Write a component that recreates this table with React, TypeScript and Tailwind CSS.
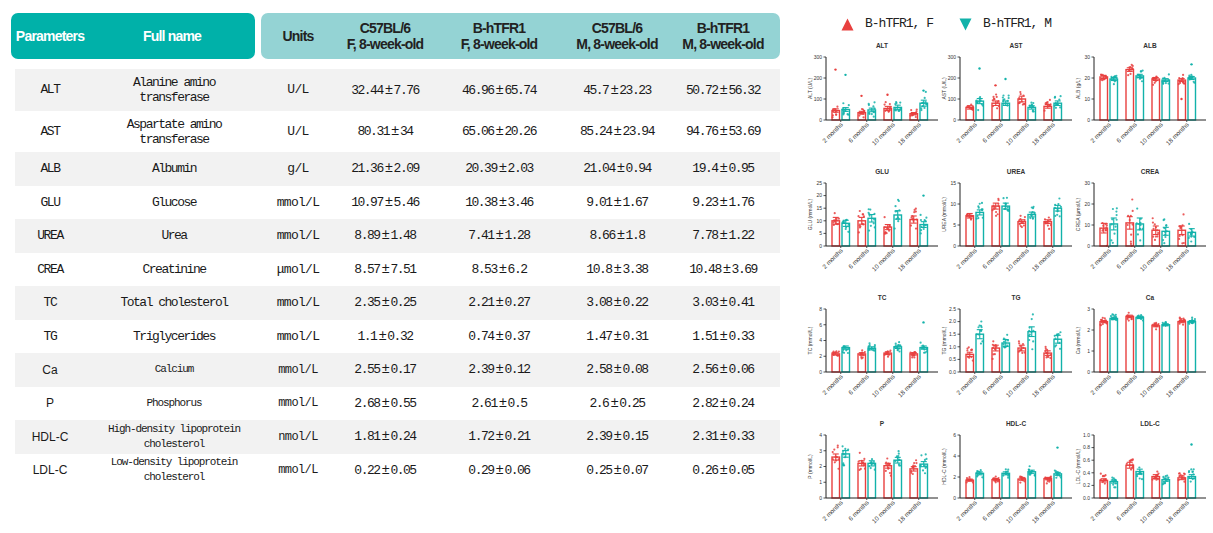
import React from "react";

const RED = "#e8403f";
const TEAL = "#12b2aa";

type Row = { p: string; n: string[]; u: string; v: string[]; tall?: boolean; small?: boolean };

const rows: Row[] = [
  { p: "ALT", n: ["Alanine amino", "transferase"], u: "U/L", v: ["32.44±7.76", "46.96±65.74", "45.7±23.23", "50.72±56.32"], tall: true },
  { p: "AST", n: ["Aspartate amino", "transferase"], u: "U/L", v: ["80.31±34", "65.06±20.26", "85.24±23.94", "94.76±53.69"], tall: true },
  { p: "ALB", n: ["Albumin"], u: "g/L", v: ["21.36±2.09", "20.39±2.03", "21.04±0.94", "19.4±0.95"] },
  { p: "GLU", n: ["Glucose"], u: "mmol/L", v: ["10.97±5.46", "10.38±3.46", "9.01±1.67", "9.23±1.76"] },
  { p: "UREA", n: ["Urea"], u: "mmol/L", v: ["8.89±1.48", "7.41±1.28", "8.66±1.8", "7.78±1.22"] },
  { p: "CREA", n: ["Creatinine"], u: "μmol/L", v: ["8.57±7.51", "8.53±6.2", "10.8±3.38", "10.48±3.69"] },
  { p: "TC", n: ["Total cholesterol"], u: "mmol/L", v: ["2.35±0.25", "2.21±0.27", "3.08±0.22", "3.03±0.41"] },
  { p: "TG", n: ["Triglycerides"], u: "mmol/L", v: ["1.1±0.32", "0.74±0.37", "1.47±0.31", "1.51±0.33"] },
  { p: "Ca", n: ["Calcium"], u: "mmol/L", v: ["2.55±0.17", "2.39±0.12", "2.58±0.08", "2.56±0.06"], small: true },
  { p: "P", n: ["Phosphorus"], u: "mmol/L", v: ["2.68±0.55", "2.61±0.5", "2.6±0.25", "2.82±0.24"], small: true },
  { p: "HDL-C", n: ["High-density lipoprotein", "cholesterol"], u: "nmol/L", v: ["1.81±0.24", "1.72±0.21", "2.39±0.15", "2.31±0.33"], small: true },
  { p: "LDL-C", n: ["Low-density lipoprotein", "cholesterol"], u: "mmol/L", v: ["0.22±0.05", "0.29±0.06", "0.25±0.07", "0.26±0.05"], small: true },
];

type Chart = {
  t: string;
  y: string;
  max: number;
  ticks: string[];
  f: number[];
  m: number[];
  sp?: number;
  out?: [number, number, number][]; // group, sex (0 F / 1 M), value
};

const charts: Chart[] = [
  { t: "ALT", y: "ALT (U/L)", max: 300, ticks: ["0", "100", "200", "300"], f: [45, 35, 55, 30], m: [50, 48, 60, 80], sp: 0.6, out: [[0, 0, 240], [0, 1, 215], [1, 0, 115], [2, 0, 120], [3, 1, 140]] },
  { t: "AST", y: "AST (U/L)", max: 300, ticks: ["0", "100", "200", "300"], f: [60, 80, 100, 65], m: [90, 80, 60, 80], sp: 0.45, out: [[0, 1, 245], [1, 0, 165], [1, 1, 195]] },
  { t: "ALB", y: "ALB (g/L)", max: 30, ticks: ["0", "10", "20", "30"], f: [20.5, 24, 19.5, 19], m: [19.5, 21, 19, 20], sp: 0.12, out: [[3, 1, 26.5], [3, 0, 10]] },
  { t: "GLU", y: "GLU (mmol/L)", max: 25, ticks: ["0", "5", "10", "15", "20", "25"], f: [10, 10, 7.5, 10.5], m: [9, 11, 12.3, 8.5], sp: 0.45, out: [[3, 1, 20]] },
  { t: "UREA", y: "UREA (mmol/L)", max: 15, ticks: ["0", "5", "10", "15"], f: [7.2, 9.5, 5.8, 5.8], m: [8, 9.5, 7.5, 9], sp: 0.25 },
  { t: "CREA", y: "CREA (μmol/L)", max: 30, ticks: ["0", "10", "20", "30"], f: [8.5, 11, 7.5, 7.5], m: [10.5, 10.5, 7, 6.5], sp: 0.9 },
  { t: "TC", y: "TC (mmol/L)", max: 8, ticks: ["0", "2", "4", "6", "8"], f: [2.3, 2.3, 2.4, 2.3], m: [3.1, 3.0, 3.2, 3.1], sp: 0.22, out: [[3, 1, 6.3]] },
  { t: "TG", y: "TG (mmol/L)", max: 2.5, ticks: ["0.0", "0.5", "1.0", "1.5", "2.0", "2.5"], f: [0.7, 0.95, 0.95, 0.75], m: [1.5, 1.15, 1.6, 1.3], sp: 0.4 },
  { t: "Ca", y: "Ca (mmol/L)", max: 3, ticks: ["0", "1", "2", "3"], f: [2.4, 2.65, 2.2, 2.4], m: [2.55, 2.6, 2.25, 2.4], sp: 0.07 },
  { t: "P", y: "P (mmol/L)", max: 4, ticks: ["0", "1", "2", "3", "4"], f: [2.6, 2.2, 2.05, 1.85], m: [2.8, 2.2, 2.4, 2.15], sp: 0.25 },
  { t: "HDL-C", y: "HDL-C (mmol/L)", max: 6, ticks: ["0", "2", "4", "6"], f: [1.7, 1.75, 1.8, 1.85], m: [2.35, 2.35, 2.5, 2.3], sp: 0.2, out: [[3, 1, 4.8]] },
  { t: "LDL-C", y: "LDL-C (mmol/L)", max: 1, ticks: ["0.0", "0.2", "0.4", "0.6", "0.8", "1.0"], f: [0.28, 0.52, 0.34, 0.32], m: [0.26, 0.42, 0.29, 0.34], sp: 0.3, out: [[3, 1, 0.85]] },
];

const months = ["2 months", "6 months", "10 months", "18 months"];

function rng(seed: number) {
  let a = seed;
  return () => {
    a |= 0;
    a = (a + 0x6d2b79f5) | 0;
    let t = Math.imul(a ^ (a >>> 15), 1 | a);
    t = (t + Math.imul(t ^ (t >>> 7), 61 | t)) ^ t;
    return ((t ^ (t >>> 14)) >>> 0) / 4294967296;
  };
}

function MiniChart({ c, seed }: { c: Chart; seed: number }) {
  const rand = rng(seed);
  const x0 = 26;
  const top = 19;
  const bot = 82;
  const sy = (v: number) => bot - (Math.min(v, c.max) / c.max) * (bot - top);
  const font = "Liberation Sans, Arial, sans-serif";
  const items: React.ReactNode[] = [];

  for (let g = 0; g < 4; g++) {
    for (let s = 0; s < 2; s++) {
      const mean = s ? c.m[g] : c.f[g];
      const color = s ? TEAL : RED;
      const bx = x0 + 6 + g * 26 + s * 10;
      const sp = c.sp ?? 0.2;
      const err = mean * sp * 0.3;
      const key = `${g}-${s}`;
      items.push(
        <rect key={`b${key}`} x={bx} y={sy(mean)} width={7.5} height={bot - sy(mean)} fill="white" stroke={color} strokeWidth={1.4} />
      );
      for (let i = 0; i < 11; i++) {
        const v = Math.max(0, mean + (rand() + rand() - 1) * 1.3 * mean * sp);
        items.push(<circle key={`d${key}${i}`} cx={bx + 0.5 + rand() * 6.5} cy={sy(v)} r={1.1} fill={color} opacity={0.85} />);
      }
      (c.out ?? [])
        .filter((o) => o[0] === g && o[1] === s)
        .forEach((o, i) => items.push(<circle key={`o${key}${i}`} cx={bx + 3.5} cy={sy(o[2])} r={1.2} fill={color} />));
      const cx = bx + 3.75;
      items.push(
        <g key={`e${key}`} stroke={color} strokeWidth={1.1}>
          <line x1={cx} x2={cx} y1={sy(mean + err)} y2={sy(mean - err)} />
          <line x1={cx - 3} x2={cx + 3} y1={sy(mean + err)} y2={sy(mean + err)} />
          <line x1={cx - 3} x2={cx + 3} y1={sy(mean - err)} y2={sy(mean - err)} />
        </g>
      );
    }
  }

  return (
    <svg width={134} height={126} className="overflow-visible">
      <text x={82} y={10} textAnchor="middle" fontSize={6.5} fontWeight={700} fill="#333" fontFamily={font}>
        {c.t}
      </text>
      <text
        x={0}
        y={0}
        transform={`translate(12 ${(top + bot) / 2}) rotate(-90)`}
        textAnchor="middle"
        fontSize={5}
        fill="#333"
        fontFamily={font}
      >
        {c.y}
      </text>
      {c.ticks.map((t, i) => {
        const y = bot - (i / (c.ticks.length - 1)) * (bot - top);
        return (
          <g key={t}>
            <line x1={x0 - 2.5} x2={x0} y1={y} y2={y} stroke="#222" strokeWidth={0.8} />
            <text x={x0 - 4} y={y + 1.8} textAnchor="end" fontSize={5} fill="#333" fontFamily={font}>
              {t}
            </text>
          </g>
        );
      })}
      {items}
      <line x1={x0} x2={x0} y1={top} y2={bot} stroke="#222" strokeWidth={1} />
      <line x1={x0} x2={x0 + 112} y1={bot} y2={bot} stroke="#222" strokeWidth={1} />
      {months.map((m, g) => {
        const tx = x0 + 6 + g * 26 + 8.75;
        return (
          <g key={m}>
            <line x1={tx} x2={tx} y1={bot} y2={bot + 2} stroke="#222" strokeWidth={0.8} />
            <text
              x={0}
              y={0}
              transform={`translate(${tx + 2.5} ${bot + 5}) rotate(-45)`}
              textAnchor="end"
              fontSize={6.3}
              fill="#333"
              fontFamily={font}
            >
              {m}
            </text>
          </g>
        );
      })}
    </svg>
  );
}

function Val({ s }: { s: string }) {
  const [a, b] = s.split("±");
  return (
    <span>
      {a}
      <span className="mx-[2px] text-[14px]">±</span>
      {b}
    </span>
  );
}

const headCols = [
  { w: "w-[100px]", a: "C57BL/6", b: "F, 8-week-old" },
  { w: "w-[128px]", a: "B-hTFR1", b: "F, 8-week-old" },
  { w: "w-[108px]", a: "C57BL/6", b: "M, 8-week-old" },
  { w: "w-[104px]", a: "B-hTFR1", b: "M, 8-week-old" },
];

const valW = ["w-[104px]", "w-[124px]", "w-[112px]", "w-[100px]"];

export default function App() {
  return (
    <div className="flex h-[533px] w-[1213px] overflow-hidden bg-white">
      <div className="w-[790px] shrink-0 pl-[11px] pt-[13px]">
        <div className="flex gap-[6px] font-['Liberation_Sans',Arial,sans-serif] text-[14px] font-bold tracking-[-0.8px] leading-[16px]">
          <div className="flex h-[46px] w-[244px] items-center rounded-[7px] bg-[#00b1a9] text-white">
            <div className="w-[78px] text-center">Parameters</div>
            <div className="w-[166px] text-center">Full name</div>
          </div>
          <div className="flex h-[46px] w-[519px] items-center rounded-[7px] bg-[#94d3d4] text-[#222]">
            <div className="w-[74px] text-center">Units</div>
            {headCols.map((h, i) => (
              <div key={i} className={`${h.w} text-center`}>
                <div>{h.a}</div>
                <div>{h.b}</div>
              </div>
            ))}
          </div>
        </div>

        <div className="ml-[4px] mt-[10px] w-[765px] font-['Liberation_Mono',monospace] text-[#1a1a1a]">
          {rows.map((r, i) => (
            <div
              key={r.p}
              className={`flex items-center ${r.tall ? (i === 0 ? "h-[42px]" : "h-[41px]") : "h-[33.5px]"} ${i % 2 === 0 ? "bg-[#f2f2f2]" : "bg-white"}`}
            >
              <div
                className={`w-[70px] text-center ${r.small ? "font-['Liberation_Sans',Arial,sans-serif] text-[12px]" : "text-[13px] tracking-[-1.4px]"}`}
              >
                {r.p}
              </div>
              <div
                className={`w-[178px] text-center leading-[15px] ${r.small ? "text-[11px] leading-[13px] tracking-[-1.1px]" : "text-[13px] tracking-[-1.5px]"}`}
              >
                {r.n.map((l) => (
                  <div key={l}>{l}</div>
                ))}
              </div>
              <div className={`w-[70px] text-center ${r.small ? "text-[12px] tracking-[-0.6px]" : "text-[13px] tracking-[-0.7px]"}`}>
                {r.u}
              </div>
              {r.v.map((v, j) => (
                <div key={j} className={`${valW[j]} text-center text-[13px] tracking-[-1.5px]`}>
                  <Val s={v} />
                </div>
              ))}
            </div>
          ))}
        </div>
      </div>

      <div className="w-[423px] shrink-0 pl-[10px]">
        <div className="flex h-[38px] items-center pl-[41px] pt-[10px] font-['Liberation_Mono',monospace] text-[13px] tracking-[-1px] text-[#222]">
          <svg width={13} height={13} viewBox="0 0 13 13">
            <polygon points="6.5,0.5 12.5,12.5 0.5,12.5" fill={RED} />
          </svg>
          <span className="ml-[11px]">B-hTFR1, F</span>
          <svg width={13} height={13} viewBox="0 0 13 13" className="ml-[26px]">
            <polygon points="0.5,0.5 12.5,0.5 6.5,12.5" fill={TEAL} />
          </svg>
          <span className="ml-[11px]">B-hTFR1, M</span>
        </div>
        <div className="grid grid-cols-[134px_134px_134px]">
          {charts.map((c, i) => (
            <MiniChart key={c.t} c={c} seed={i * 97 + 13} />
          ))}
        </div>
      </div>
    </div>
  );
}
